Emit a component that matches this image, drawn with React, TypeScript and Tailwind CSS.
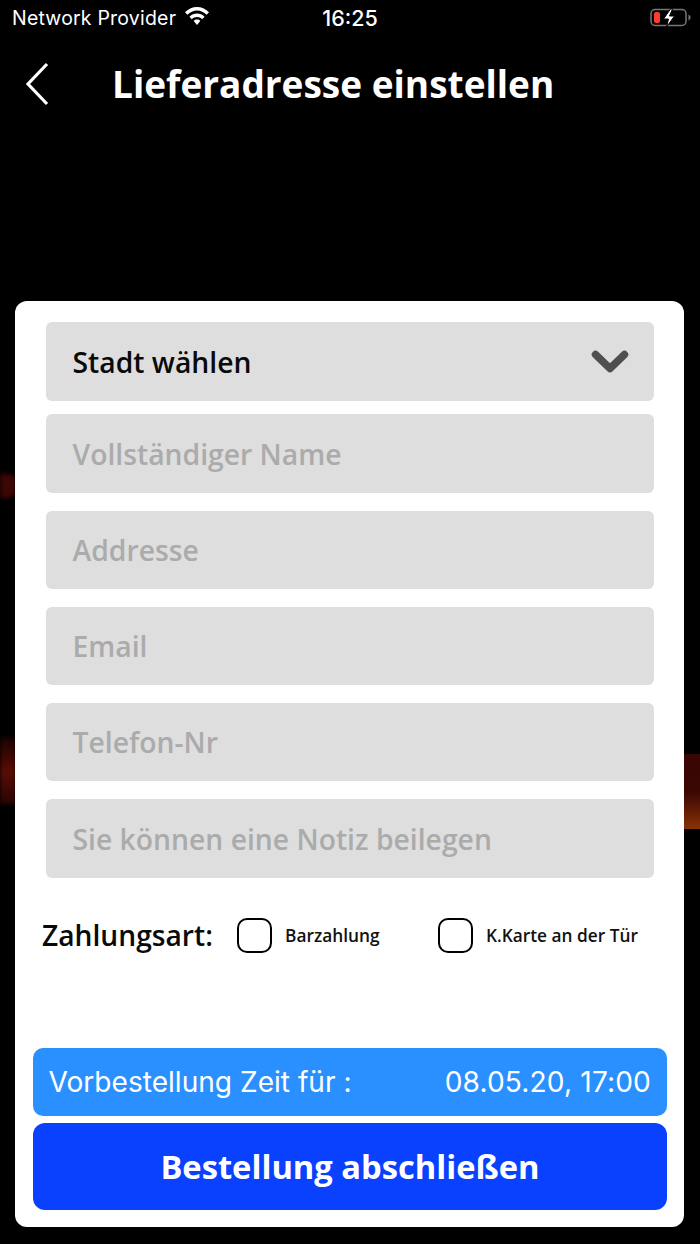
const openSans = "font-['Open_Sans',sans-serif]";

const Field = ({ label, className }: { label: string; className: string }) => (
  <div className={`flex items-center h-[78px] ml-[31px] mr-[30px] pl-[26.5px] pr-[26px] pt-[1px] rounded-[6px] bg-[#dedede] text-[#ababab] text-[28.3px] font-semibold ${className}`}>
    {label}
  </div>
);

const Radio = ({ label, className }: { label: string; className: string }) => (
  <div className={`flex items-center ${className}`}>
    <span className="w-[35px] h-[35px] rounded-[10px] border-2 border-black shrink-0" />
    <span className="ml-[13px] pt-[1px] text-[17.3px] font-semibold text-[#111] whitespace-nowrap">{label}</span>
  </div>
);

export default function App() {
  return (
    <div className={`relative w-[700px] h-[1244px] bg-black overflow-hidden flex flex-col ${openSans}`}>
      {/* Reste vom Hintergrundbild */}
      <div className="absolute left-0 top-[474px] w-[16px] h-[24px] rounded-r-[8px] bg-[#3d0604] blur-[2px]" />
      <div className="absolute left-0 top-[738px] w-[16px] h-[66px] bg-gradient-to-b from-[#1c0302] via-[#5a0d06] to-[#2a0503] blur-[2px]" />
      <div className="absolute right-0 top-[754px] w-[16px] h-[75px] bg-gradient-to-b from-[#3a0604] via-[#3a0703] to-[#8a3206]" />

      <div className="relative h-[36px] flex items-center text-white font-['Inter',sans-serif]">
        <span className="ml-[12px] pt-[2px] text-[19.5px] tracking-[0.2px]">Network Provider</span>
        <svg className="ml-[8px] -mt-[5px]" width="26" height="20" viewBox="0 0 26 20" fill="#fff">
          <path d="M13 1C8.6 1 4.6 2.7 1 6.2L3.4 8.8C6.1 6.2 9.4 4.6 13 4.6s6.9 1.6 9.6 4.2L25 6.2C21.4 2.7 17.4 1 13 1z" />
          <path d="M13 7.4c-2.8 0-5.4 1.1-7.6 3.3l2.4 2.5c1.4-1.4 3.2-2.2 5.2-2.2s3.8.8 5.2 2.2l2.4-2.5C18.4 8.5 15.8 7.4 13 7.4z" />
          <path d="M13 13.6c-1.3 0-2.4.5-3.3 1.4L13 19l3.3-4c-.9-.9-2-1.4-3.3-1.4z" />
        </svg>
        <span className="absolute left-0 right-0 text-center text-[21.5px] font-medium">16:25</span>
        <svg className="absolute left-[650px] top-[8px]" width="41" height="20" viewBox="0 0 41 20" fill="none">
          <rect x="1" y="1.5" width="35" height="16" rx="4" stroke="#777" strokeWidth="1.5" />
          <rect x="4" y="4" width="6" height="11" rx="2" fill="#ff3b30" />
          <path d="M38.5 6.5c1.2.5 2 1.6 2 3s-.8 2.5-2 3z" fill="#777" />
          <path d="M20.5 1 13.5 11h5l-2 8 8-11h-5l3-7z" fill="#fff" stroke="#000" strokeWidth="1" />
        </svg>
      </div>

      <div className="relative h-[265px] text-white">
        <svg className="absolute left-[24px] top-[25px]" width="28" height="46" viewBox="0 0 28 46" fill="none">
          <path d="M23 3 4 23l19 20" stroke="#fff" strokeWidth="3.2" />
        </svg>
        <h1 className="pl-[112px] pt-[23px] text-[37px] leading-[50px] font-bold whitespace-nowrap">Lieferadresse einstellen</h1>
      </div>

      <div className="ml-[15px] w-[669px] h-[926px] rounded-[12px] bg-white flex flex-col pt-[21px] relative">
        <div className="flex items-center justify-between h-[79px] ml-[31px] mr-[30px] pl-[26.5px] pr-[25px] pt-[1px] rounded-[6px] bg-[#dedede] text-[#0a0a0a] text-[28.3px] font-semibold">
          Stadt wählen
          <svg width="38" height="24" viewBox="0 0 38 24" fill="none">
            <path d="M4.5 4.5 19 18.5 33.5 4.5" stroke="#4f4f4f" strokeWidth="7.5" strokeLinecap="round" strokeLinejoin="round" />
          </svg>
        </div>
        <Field label="Vollständiger Name" className="mt-[13px] h-[79px]" />
        <Field label="Addresse" className="mt-[18px]" />
        <Field label="Email" className="mt-[18px]" />
        <Field label="Telefon-Nr" className="mt-[18px]" />
        <Field label="Sie können eine Notiz beilegen" className="mt-[18px] h-[79px]" />

        <div className="flex items-center mt-[39px] h-[36px] pl-[27px]">
          <span className="w-[195px] pt-[1px] text-[28.2px] font-semibold text-[#0a0a0a] whitespace-nowrap">Zahlungsart:</span>
          <Radio label="Barzahlung" className="w-[201px]" />
          <Radio label="K.Karte an der Tür" className="" />
        </div>

        <div className="flex items-center justify-between h-[68px] ml-[18px] mr-[17px] mt-[95px] pl-[15.5px] pr-[16px] rounded-[10px] bg-[#2b90ff] text-white text-[28.1px] font-['Inter',sans-serif] font-normal">
          <span>Vorbestellung Zeit für :</span>
          <span className="tracking-[0.15px]">08.05.20, 17:00</span>
        </div>
        <button className="flex items-center justify-center h-[87px] ml-[18px] mr-[17px] mt-[7px] rounded-[12px] bg-[#0a41ff] text-white text-[32.7px] font-bold">
          Bestellung abschließen
        </button>
      </div>
    </div>
  );
}
